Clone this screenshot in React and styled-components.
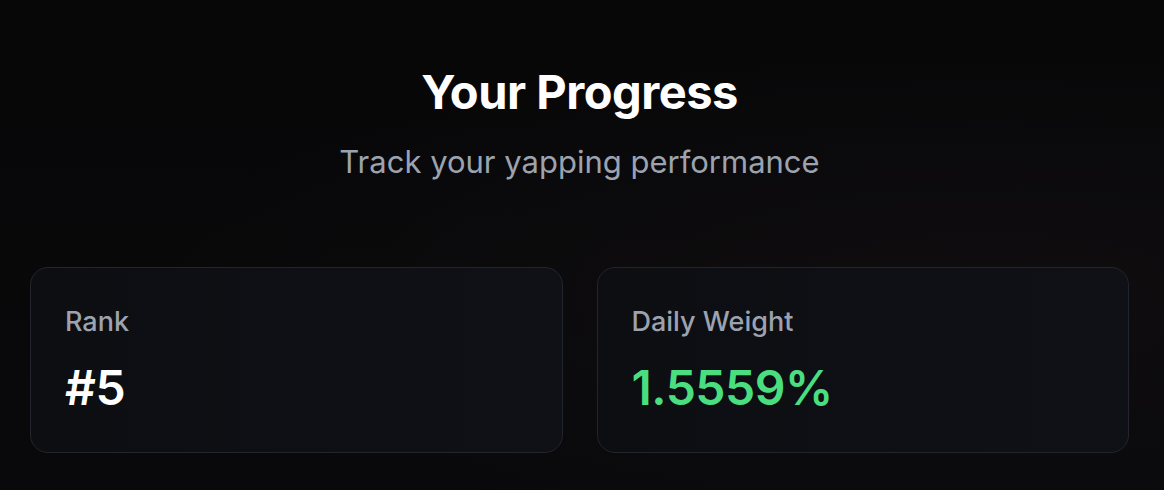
import styled, { createGlobalStyle } from "styled-components";

const GlobalStyle = createGlobalStyle`
  html, body {
    margin: 0;
    padding: 0;
    background: #070708;
  }
  body {
    font-family: Inter, "Noto Sans", sans-serif;
    -webkit-font-smoothing: antialiased;
  }
`;

function App() {
  return (
    <>
      <GlobalStyle />
      <Page>
        <Header>
          <Title>Your Progress</Title>
          <Subtitle>Track your yapping performance</Subtitle>
        </Header>
        <StatsGrid>
          <StatCard>
            <StatLabel>Rank</StatLabel>
            <StatValue>#5</StatValue>
          </StatCard>
          <StatCard>
            <StatLabel>Daily Weight</StatLabel>
            <StatValue $accent>1.5559%</StatValue>
          </StatCard>
        </StatsGrid>
      </Page>
    </>
  );
}

const Page = styled.main`
  box-sizing: border-box;
  width: 1164px;
  height: 490px;
  padding: 61px 35px 0 30px;
  background: radial-gradient(
      ellipse at 85% 60%,
      rgba(30, 22, 26, 0.35),
      transparent 60%
    ),
    linear-gradient(180deg, #070708 0%, #09090b 100%);
  overflow: hidden;
`;

const Header = styled.header`
  display: flex;
  flex-direction: column;
  align-items: center;
  margin-bottom: 84px;
`;

const Title = styled.h1`
  margin: 0;
  color: #ffffff;
  font-size: 47px;
  font-weight: 700;
  line-height: 62px;
  letter-spacing: -0.5px;
`;

const Subtitle = styled.p`
  margin: 18px 0 0;
  color: #9ca3af;
  font-size: 31px;
  font-weight: 400;
  line-height: 42px;
`;

const StatsGrid = styled.section`
  display: grid;
  grid-template-columns: 1fr 1fr;
  gap: 34px;
`;

const StatCard = styled.div`
  box-sizing: border-box;
  height: 186px;
  padding: 36px 34px;
  border: 1.5px solid #22252d;
  border-radius: 18px;
  background: linear-gradient(90deg, #0d0e12 0%, #0f1117 100%);
  display: flex;
  flex-direction: column;
  gap: 24px;
`;

const StatLabel = styled.span`
  color: #9ca3af;
  font-size: 27px;
  font-weight: 500;
  line-height: 36px;
`;

const StatValue = styled.span`
  color: ${(p) => (p.$accent ? "#4ade80" : "#ffffff")};
  font-size: 48px;
  font-weight: 600;
  line-height: 48px;
  letter-spacing: -0.5px;
`;

export default App;
